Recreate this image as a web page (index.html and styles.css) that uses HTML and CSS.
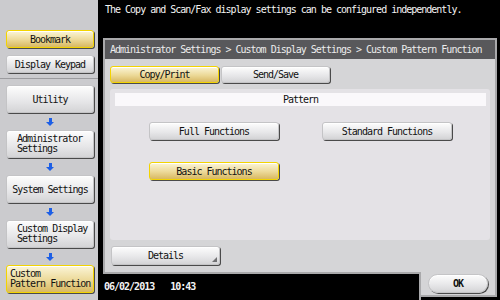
FILE: index.html
```html
<!DOCTYPE html>
<html lang="en">
  <head>
    <meta charset="UTF-8" />
    <title>Custom Pattern Function</title>
    <link rel="stylesheet" href="styles.css">
  </head>
  <body>
    <div class="sidebar">
      <div class="side-top">
        <button class="btn gold side-btn small">Bookmark</button>
        <button class="btn side-btn small">Display Keypad</button>
      </div>
      <div class="side-flow">
        <button class="btn side-btn">Utility</button>
        <div class="arrow"></div>
        <button class="btn side-btn multi">Administrator<br>Settings</button>
        <div class="arrow"></div>
        <button class="btn side-btn">System Settings</button>
        <div class="arrow"></div>
        <button class="btn side-btn multi">Custom Display<br>Settings</button>
        <div class="arrow"></div>
        <button class="btn gold side-btn multi tight">Custom<br>Pattern Function</button>
      </div>
    </div>

    <div class="main">
      <div class="message">The Copy and Scan/Fax display settings can be configured independently.</div>

      <div class="panel">
        <div class="crumb">Administrator Settings &gt; Custom Display Settings &gt; Custom Pattern Function</div>

        <div class="tabs">
          <button class="btn gold tab">Copy/Print</button>
          <button class="btn tab">Send/Save</button>
        </div>

        <div class="content">
          <div class="content-head">Pattern</div>
          <div class="choices">
            <button class="btn choice">Full Functions</button>
            <button class="btn choice">Standard Functions</button>
            <button class="btn gold choice">Basic Functions</button>
          </div>
        </div>

        <button class="btn details">Details</button>
      </div>

      <div class="footer">
        <div class="clock"><span>06/02/2013</span><span>10:43</span></div>
        <div class="ok-cell">
          <button class="btn ok">OK</button>
        </div>
      </div>
    </div>
  </body>
</html>
```

FILE: styles.css
```css
* {
  padding: 0;
  margin: 0;
  box-sizing: border-box;
}

body {
  display: flex;
  width: 500px;
  height: 300px;
  overflow: hidden;
  background: #000;
  font-family: "DejaVu Sans Mono", "Liberation Mono", monospace;
  font-size: 10px;
  letter-spacing: -1px;
  color: #111;
}

/* buttons */

.btn {
  display: flex;
  align-items: center;
  justify-content: center;
  font: inherit;
  letter-spacing: inherit;
  color: #111;
  background: linear-gradient(#fdfdfd, #e6e6e8 60%, #d4d4d6);
  border: 1px solid #c4c4c6;
  border-radius: 3px;
  box-shadow: 1px 1px 0 #4a4a4a, inset 0 1px 0 #fff;
}

.btn.gold {
  background: linear-gradient(#fbf5d8, #ecd998 55%, #d8b862);
  border: 1px solid #f3d400;
}

/* sidebar */

.sidebar {
  width: 98px;
  height: 300px;
  background: #cbcbce;
  flex-shrink: 0;
}

.side-top {
  display: flex;
  flex-direction: column;
  gap: 7px;
  height: 79px;
  padding-top: 30px;
  border-bottom: 1px solid #9c9c9f;
}

.side-btn {
  width: 88px;
  height: 28px;
  margin-left: 6px;
}

.side-btn.small {
  height: 18px;
}

.side-btn.multi {
  justify-content: flex-start;
  text-align: left;
  line-height: 10px;
  padding-left: 10px;
}

.side-btn.tight {
  padding-left: 3px;
}

.side-flow {
  display: flex;
  flex-direction: column;
  padding-top: 6px;
}

.arrow {
  position: relative;
  height: 17px;
}

.arrow::before {
  content: "";
  position: absolute;
  left: 49px;
  top: 5px;
  width: 3px;
  height: 4px;
  background: #1d5fe6;
}

.arrow::after {
  content: "";
  position: absolute;
  left: 46px;
  top: 9px;
  border-left: 4.5px solid transparent;
  border-right: 4.5px solid transparent;
  border-top: 4px solid #1d5fe6;
}

/* main */

.main {
  display: flex;
  flex-direction: column;
  width: 402px;
  margin-left: 3px;
}

.message {
  height: 38px;
  padding: 4px 0 0 4px;
  color: #f4f4f4;
}

.panel {
  display: flex;
  flex-direction: column;
  height: 234px;
  margin: 0 3px 0 2px;
  background: #d5d5d7;
  border: 2px solid #a9a9ab;
  border-bottom: none;
}

.crumb {
  height: 19px;
  line-height: 19px;
  padding-left: 5px;
  background: #58585b;
  color: #ececec;
}

.tabs {
  display: flex;
  gap: 2px;
  margin: 7px 0 0 5px;
}

.tab {
  width: 109px;
  height: 17px;
}

.content {
  height: 151px;
  margin: 6px 5px 0 5px;
  padding: 4px 4px 0 5px;
  background: #e4e2e6;
  border-radius: 3px;
}

.content-head {
  height: 13px;
  line-height: 13px;
  text-align: center;
  background: #faf8fb;
}

.choices {
  display: grid;
  grid-template-columns: 130px 130px;
  column-gap: 43px;
  row-gap: 22px;
  padding: 16px 0 0 34px;
}

.choice {
  height: 18px;
}

.details {
  position: relative;
  width: 109px;
  height: 19px;
  margin: 6px 0 0 6px;
}

.details::after {
  content: "";
  position: absolute;
  right: 2px;
  bottom: 2px;
  border-left: 5px solid transparent;
  border-bottom: 5px solid #707072;
}

/* footer */

.footer {
  display: flex;
  height: 28px;
  margin: 0 3px 0 2px;
}

.clock {
  display: flex;
  gap: 16px;
  width: 318px;
  padding: 7px 0 0 1px;
  color: #f4f4f4;
  font-weight: bold;
  border-top: 2px solid #a9a9ab;
  border-right: 2px solid #a9a9ab;
}

.ok-cell {
  flex: 1;
  height: 25px;
  padding: 2px 0 0 7px;
  background: #d5d5d7;
  border-right: 2px solid #a9a9ab;
  border-bottom: 2px solid #a9a9ab;
}

.btn.ok {
  width: 60px;
  height: 19px;
  border-radius: 10px;
  font-weight: bold;
}
```
